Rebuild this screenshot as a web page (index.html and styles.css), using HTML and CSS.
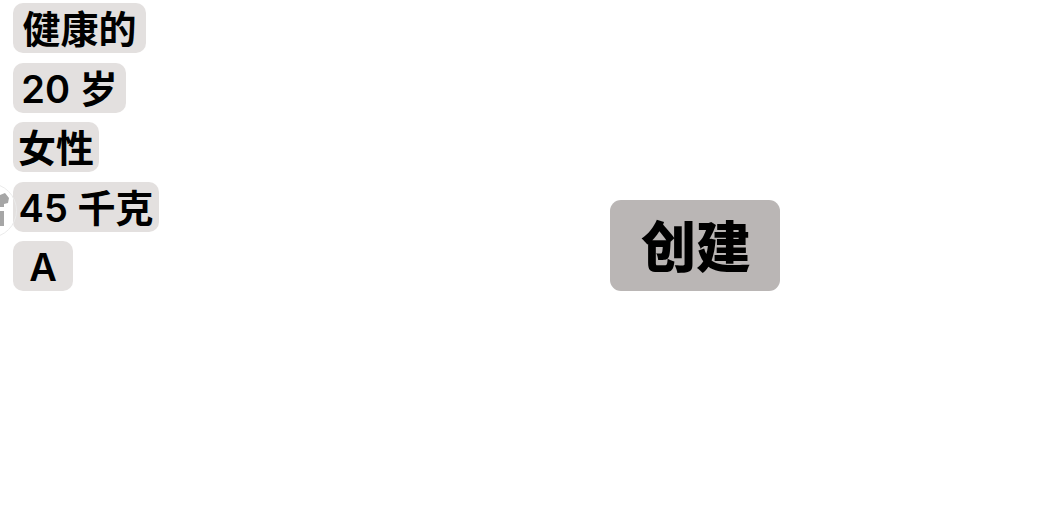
FILE: index.html
```html
<!DOCTYPE html>
<html lang="zh">
<head>
<meta charset="utf-8">
<title>创建</title>
<link rel="stylesheet" href="styles.css">
</head>
<body>
<main class="page">
  <ul class="tags">
    <li class="tag tag-healthy">健康的</li>
    <li class="tag tag-age">20 岁</li>
    <li class="tag tag-sex">女性</li>
    <li class="tag tag-weight">45 千克</li>
    <li class="tag tag-type">A</li>
  </ul>
  <button class="create" type="button">创建</button>
  <div class="avatar" aria-hidden="true">
    <svg class="avatar-icon" viewBox="0 0 9 34"><path d="M0 3 L5 1 L9 6 L8 11 L4 12 L4 15 L0 15 Z M0 19 L4 19 L4 34 L0 34 Z" fill="#a6a6a6"/></svg>
  </div>
</main>
</body>
</html>
```
FILE: styles.css
```css
* { box-sizing: border-box; }
html, body { margin: 0; height: 100%; background: #fff; }
body { overflow: hidden; font-family: Inter, "Noto Sans CJK SC", "Noto Sans", sans-serif; color: #000; }
.page { position: relative; height: 520px; display: flex; align-items: flex-start; padding: 3px 0 0 13px; }
.tags { list-style: none; margin: 0; padding: 0; width: 597px; display: flex; flex-direction: column; align-items: flex-start; gap: 9.5px; }
.tag { height: 50px; line-height: 52px; border-radius: 10px; background: #e3e0df; font-size: 38px; font-weight: 600; text-align: center; white-space: nowrap; }
.tag-healthy { width: 133px; }
.tag-age { width: 113px; }
.tag-sex { width: 86px; }
.tag-weight { width: 146px; }
.tag-type { width: 60px; }
.create { margin-top: 197px; width: 170px; height: 91px; border: 0; border-radius: 11px; background: #bab6b5; color: #000; font-family: inherit; font-size: 55px; font-weight: 900; padding: 3px 0 0 2px; line-height: 88px; }
.avatar { position: absolute; left: -38px; top: 183px; width: 55px; height: 55px; border-radius: 50%; border: 1px solid #ebebeb; overflow: hidden; }
.avatar-icon { position: absolute; left: 37px; top: 8px; width: 9px; height: 34px; }
```
